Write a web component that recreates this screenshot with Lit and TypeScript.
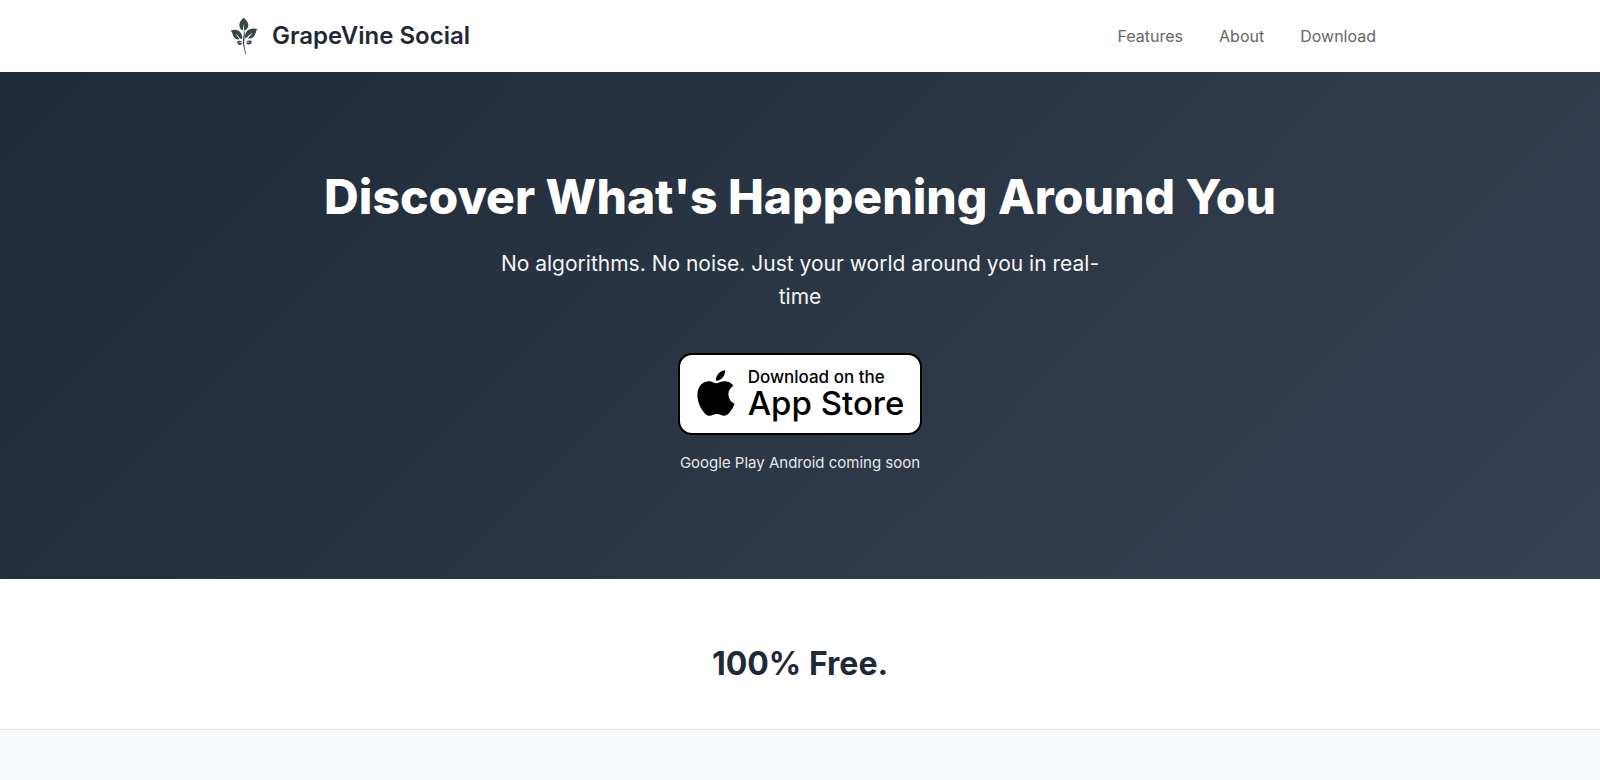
import { LitElement, html, css, svg } from "lit";
import { customElement } from "lit/decorators.js";

const leafLogo = svg`
  <path d="M71 23 C63 30 58 37 58 45 C58 53 62 58 67 61 C69 62 69 59 69 56 L71 40 L72 56 C72 60 73 62 75 61 C81 58 85 52 85 45 C85 37 79 30 71 23 Z"/>
  <path d="M32 62 C41 58 52 58 58 64 C64 69 67 77 67 84 C66 88 62 87 59 84 C55 79 52 75 48 73 C51 79 55 83 59 87 C53 90 46 87 42 81 C37 75 39 67 32 62 Z"/>
  <path d="M112 57 C102 54 89 55 82 62 C77 67 74 75 75 82 C76 85 79 84 82 81 C87 76 91 72 97 69 C93 75 88 80 84 85 C92 87 101 83 104 76 C108 70 107 63 112 57 Z"/>
  <path d="M50 97 C53 92 60 91 67 95 C62 95 58 96 55 98 C59 98 63 98 67 98 C65 103 61 106 57 105 C53 104 54 98 50 97 Z"/>
  <path d="M97 95 C91 90 84 90 78 95 C83 95 87 95 90 97 C86 98 82 97 78 98 C81 103 86 105 90 103 C94 102 93 97 97 95 Z"/>
  <path d="M71 62 C73 78 66 91 70 107 C71 115 74 123 76 131 L79 131 C75 122 74 114 73 106 C71 91 77 78 73 62 Z"/>`;

@customElement("app-root")
export class AppRoot extends LitElement {
  static styles = css`
    :host {
      display: block;
      min-height: 100vh;
      background: #f9fafc;
      color: #1f2937;
      font-family: Inter, "Liberation Sans", sans-serif;
      font-size: 16px;
      line-height: 24px;
    }
    h1,
    h2,
    p {
      margin: 0;
    }
    a {
      color: inherit;
      text-decoration: none;
    }
    .header {
      background: #fff;
    }
    .bar {
      box-sizing: border-box;
      max-width: 1200px;
      margin: 0 auto;
      padding: 16px 24px;
      display: flex;
      align-items: center;
      justify-content: space-between;
    }
    .brand {
      display: flex;
      align-items: center;
      gap: 8px;
      font-size: 24px;
      line-height: 26px;
      font-weight: 600;
    }
    .leaf {
      width: 40px;
      height: 40px;
      fill: #35484a;
    }
    .nav {
      display: flex;
      gap: 36px;
      color: #666;
    }
    .hero {
      padding: 96px 24px 104px;
      display: flex;
      flex-direction: column;
      align-items: center;
      text-align: center;
      color: #fff;
      background: linear-gradient(135deg, #1f2a38 0%, #374252 100%);
    }
    .title {
      font-size: 48px;
      line-height: 58px;
      font-weight: 800;
    }
    .lead {
      max-width: 600px;
      margin: 21px 0 40px;
      font-size: 21px;
      line-height: 33px;
      color: #f3f4f5;
    }
    .badge {
      box-sizing: border-box;
      height: 82px;
      padding: 0 16px 2px 17px;
      display: flex;
      align-items: center;
      gap: 13px;
      border: 2px solid #000;
      border-radius: 14px;
      background: #fff;
      color: #000;
      text-align: left;
      font-weight: 500;
    }
    .apple {
      width: 38px;
      height: 46px;
    }
    .words {
      display: flex;
      flex-direction: column;
    }
    .small {
      font-size: 17px;
      line-height: 20px;
    }
    .large {
      font-size: 33px;
      line-height: 32px;
    }
    .soon {
      margin-top: 16px;
      font-size: 15px;
      line-height: 24px;
      color: #e5e7e9;
    }
    .free {
      padding: 64px 24px 44px;
      background: #fff;
      border-bottom: 1px solid #e5e7eb;
      text-align: center;
    }
    .price {
      font-size: 32px;
      line-height: 42px;
      font-weight: 700;
    }
  `;

  render() {
    return html`
      <header class="header">
        <div class="bar">
          <a class="brand" href="#">
            <svg class="leaf" viewBox="12 18 120 120" aria-hidden="true">${leafLogo}</svg>
            <span>GrapeVine Social</span>
          </a>
          <nav class="nav">
            <a href="#features">Features</a>
            <a href="#about">About</a>
            <a href="#download">Download</a>
          </nav>
        </div>
      </header>
      <main>
        <section class="hero">
          <h1 class="title">Discover What's Happening Around You</h1>
          <p class="lead">No algorithms. No noise. Just your world around you in real-time</p>
          <a class="badge" href="#download">
            <svg class="apple" viewBox="2 0 20 24" aria-hidden="true">
              <path d="M12.152 6.896c-.948 0-2.415-1.078-3.96-1.04-2.04.027-3.91 1.183-4.961 3.014-2.117 3.675-.546 9.103 1.519 12.09 1.013 1.454 2.208 3.09 3.792 3.039 1.52-.065 2.09-.987 3.935-.987 1.831 0 2.35.987 3.96.948 1.637-.026 2.676-1.48 3.676-2.948 1.156-1.688 1.636-3.325 1.662-3.415-.039-.013-3.182-1.221-3.22-4.857-.026-3.04 2.48-4.494 2.597-4.559-1.429-2.09-3.623-2.324-4.39-2.376-2-.156-3.675 1.09-4.61 1.09zM15.53 3.83c.843-1.012 1.4-2.427 1.245-3.83-1.207.052-2.662.805-3.532 1.818-.78.896-1.454 2.338-1.273 3.714 1.338.104 2.715-.688 3.559-1.701"/>
            </svg>
            <span class="words">
              <span class="small">Download on the</span>
              <span class="large">App Store</span>
            </span>
          </a>
          <p class="soon">Google Play Android coming soon</p>
        </section>
        <section class="free">
          <h2 class="price">100% Free.</h2>
        </section>
      </main>
    `;
  }
}
